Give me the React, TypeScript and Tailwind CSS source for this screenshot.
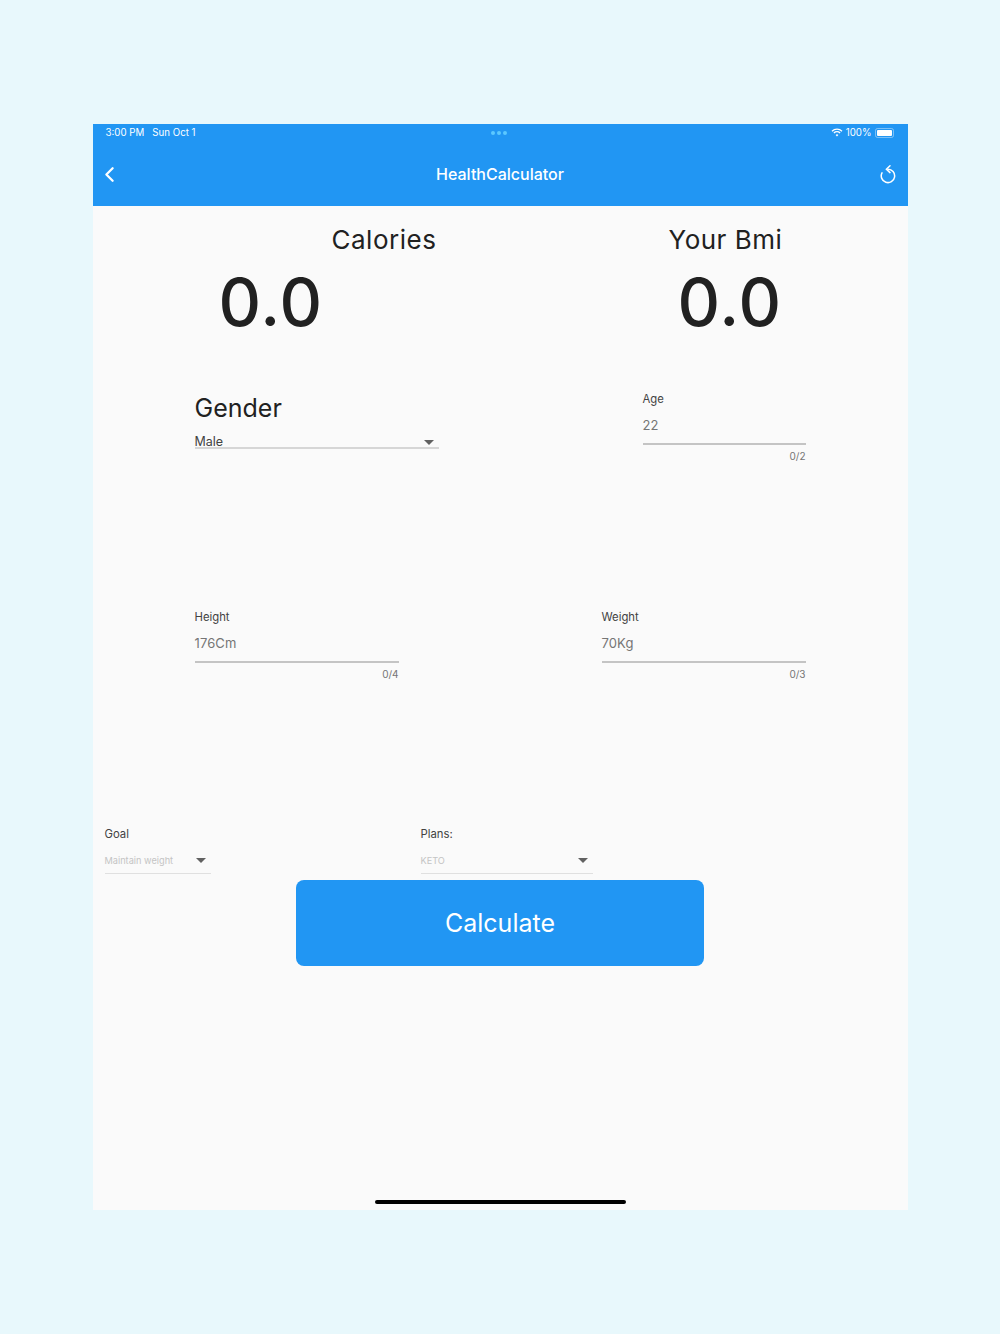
import { ChevronLeft } from 'lucide-react';

function Caret() {
  return <div className="w-0 h-0 border-x-[5px] border-x-transparent border-t-[5px] border-t-[#616161]" />;
}

function TextInput({ label, hint, counter, width }: { label: string; hint: string; counter: string; width: string }) {
  return (
    <div className={width}>
      <div className="text-[11.3px] leading-[14px] text-[#424242]">{label}</div>
      <div className="mt-[11px] h-[25px] text-[13px] leading-[16px] tracking-[0.1px] text-[#757575]">{hint}</div>
      <div className="h-[2px] mt-[1px] bg-[#c4c4c4]" />
      <div className="mt-[5px] text-right text-[10px] leading-[12px] text-[#757575]">{counter}</div>
    </div>
  );
}

function SmallSelect({ label, value, width, gapClass }: { label: string; value: string; width: string; gapClass: string }) {
  return (
    <div className={`${width} ${gapClass}`}>
      <div className="text-[11.3px] leading-[14px] text-[#424242]">{label}</div>
      <div className="mt-[12px] h-[21px] flex items-center justify-between pr-[5px] border-b border-[#e0e0e0] pb-[5px]">
        <span className="text-[9.2px] leading-[12px] text-[#c4c4c4]">{value}</span>
        <Caret />
      </div>
    </div>
  );
}

export default function App() {
  return (
    <div className="min-h-[1334px] bg-[#e8f8fc] pt-[124px] font-['Inter',sans-serif]">
      <div className="relative mx-auto w-[815px] h-[1086px] bg-[#fafafa]">
        <header className="h-[82px] bg-[#2196f3] text-white">
          <div className="relative flex items-center justify-between h-[18px] pl-[13px] pr-[14px] text-[9.7px]">
            <span>3:00 PM&nbsp;&nbsp;&nbsp;Sun Oct 1</span>
            <div className="absolute left-[398px] top-[7px] flex gap-[2px]">
              <span className="w-[4px] h-[4px] rounded-full bg-[#5cc8ff]" />
              <span className="w-[4px] h-[4px] rounded-full bg-[#5cc8ff]" />
              <span className="w-[4px] h-[4px] rounded-full bg-[#5cc8ff]" />
            </div>
            <div className="flex items-center gap-[3px]">
              <svg width="12" height="9" viewBox="0 0 12 9" fill="none" stroke="white" strokeWidth="1.3">
                <path d="M1 3.2a7 7 0 0 1 10 0" />
                <path d="M2.9 5a4.4 4.4 0 0 1 6.2 0" />
                <path d="M6 8.6 4.6 6.9a2 2 0 0 1 2.8 0z" fill="white" stroke="none" />
              </svg>
              <span>100%</span>
              <div className="w-[19px] h-[10px] rounded-[2.5px] border border-white/40 p-[1px]">
                <div className="w-full h-full rounded-[1px] bg-white" />
              </div>
            </div>
          </div>
          <div className="flex items-center justify-between h-[64px] pl-[4px] pr-[11px]">
            <ChevronLeft size={25} strokeWidth={2.2} />
            <h1 className="text-[16px] font-medium">HealthCalculator</h1>
            <svg width="18" height="20" viewBox="0 0 18 20" fill="none" stroke="white" strokeWidth="1.5" strokeLinecap="round">
              <path d="M9 5.2a6.7 6.7 0 1 1-6 3.6" />
              <path d="M11 1.8 7.4 5.2 11 8.6" />
            </svg>
          </div>
        </header>

        <main className="relative">
          <section className="flex h-[164px]">
            <div className="w-[370px] pl-[126px]">
              <div className="pl-[113px] pt-[17px] text-[26px] leading-[34px] tracking-[0.5px] text-[#212121] whitespace-nowrap">Calories</div>
              <div className="mt-[5px] text-[66px] leading-[80px] tracking-[1px] font-medium text-[#212121]">0.0</div>
            </div>
            <div className="pl-[206px]">
              <div className="pt-[17px] text-[26px] leading-[34px] tracking-[0.5px] text-[#212121] whitespace-nowrap">Your Bmi</div>
              <div className="mt-[5px] pl-[9px] text-[66px] leading-[80px] tracking-[1px] font-medium text-[#212121]">0.0</div>
            </div>
          </section>

          <section className="flex justify-between pl-[102px] pr-[102px] pt-[22px] h-[237px]">
            <div className="w-[244px]">
              <div className="text-[25px] leading-[32px] text-[#212121]">Gender</div>
              <div className="mt-[8px] h-[17px] flex items-end justify-between pr-[5px] border-b-2 border-[#d6d6d6]">
                <span className="-mb-[2px] text-[12.5px] leading-[15px] text-[#424242]">Male</span>
                <div className="mb-[2px]"><Caret /></div>
              </div>
            </div>
            <TextInput label="Age" hint="22" counter="0/2" width="w-[163px]" />
          </section>

          <section className="flex justify-between pl-[102px] pr-[102px] pt-[3px] h-[220px]">
            <TextInput label="Height" hint="176Cm" counter="0/4" width="w-[204px]" />
            <TextInput label="Weight" hint="70Kg" counter="0/3" width="w-[204px]" />
          </section>

          <section className="flex pl-[12px]">
            <SmallSelect label="Goal" value="Maintain weight" width="w-[106px]" gapClass="mr-[210px]" />
            <SmallSelect label="Plans:" value="KETO" width="w-[172px]" gapClass="" />
          </section>

          <div className="flex justify-center mt-[6px]">
            <button className="w-[408px] h-[86px] pt-[2px] rounded-[8px] bg-[#2196f3] text-white text-[25px]">Calculate</button>
          </div>
        </main>

        <div className="absolute left-[282px] bottom-[6px] w-[251px] h-[4px] rounded-full bg-black" />
      </div>
    </div>
  );
}
